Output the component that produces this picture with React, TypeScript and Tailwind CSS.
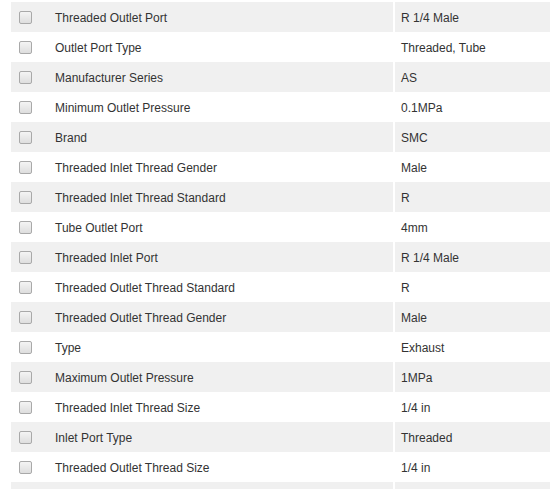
import React from 'react'

const SPECS: [string, string][] = [
  ['Threaded Outlet Port', 'R 1/4 Male'],
  ['Outlet Port Type', 'Threaded, Tube'],
  ['Manufacturer Series', 'AS'],
  ['Minimum Outlet Pressure', '0.1MPa'],
  ['Brand', 'SMC'],
  ['Threaded Inlet Thread Gender', 'Male'],
  ['Threaded Inlet Thread Standard', 'R'],
  ['Tube Outlet Port', '4mm'],
  ['Threaded Inlet Port', 'R 1/4 Male'],
  ['Threaded Outlet Thread Standard', 'R'],
  ['Threaded Outlet Thread Gender', 'Male'],
  ['Type', 'Exhaust'],
  ['Maximum Outlet Pressure', '1MPa'],
  ['Threaded Inlet Thread Size', '1/4 in'],
  ['Inlet Port Type', 'Threaded'],
  ['Threaded Outlet Thread Size', '1/4 in'],
  ['', ''],
]

function Checkbox() {
  return (
    <span className="block w-[13px] h-[13px] -translate-y-[1px] rounded-[2px] border border-[#a9a9a9] bg-gradient-to-b from-[#f4f4f4] to-[#dedede]" />
  )
}

export default function App() {
  return (
    <div className="w-[550px] h-[489px] overflow-hidden bg-white pl-[11px] pt-[2px] font-['Liberation_Sans',Arial,sans-serif] text-[12px] text-[#333]">
      {SPECS.map(([name, value], i) => {
        const shaded = i % 2 === 0
        return (
          <div key={i} className="flex h-[30px] gap-[2px]">
            {/* ── name cell ─────────────── */}
            <div className={`flex items-center w-[382px] shrink-0 pt-[2px] ${shaded ? 'bg-[#f0f0f0]' : 'bg-white'}`}>
              <div className="w-[44px] pl-[8px] shrink-0">
                {name && <Checkbox />}
              </div>
              <span>{name}</span>
            </div>
            {/* ── value cell ────────────── */}
            <div className={`flex items-center flex-1 pl-[6px] pt-[2px] ${shaded ? 'bg-[#f0f0f0]' : 'bg-white'}`}>
              {value}
            </div>
          </div>
        )
      })}
    </div>
  )
}
